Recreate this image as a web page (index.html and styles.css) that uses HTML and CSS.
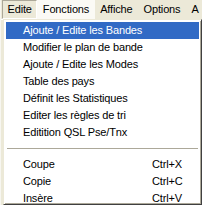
FILE: index.html
```html
<!DOCTYPE html>
<html lang="fr">
<head>
    <meta charset="UTF-8">
    <title>Edite</title>
    <link rel="stylesheet" href="styles.css">
</head>
<body>
<div class="win">
    <ul class="bar">
        <li class="down">Edite</li>
        <li class="hot">Fonctions</li>
        <li>Affiche</li>
        <li>Options</li>
        <li>A</li>
    </ul>
    <div class="menu">
        <ul>
            <li class="sel"><span>Ajoute / Edite les Bandes</span></li>
            <li><span>Modifier le plan de bande</span></li>
            <li><span>Ajoute / Edite les Modes</span></li>
            <li><span>Table des pays</span></li>
            <li><span>Définit les Statistiques</span></li>
            <li><span>Editer les règles de tri</span></li>
            <li><span>Editition QSL Pse/Tnx</span></li>
            <li class="sep"></li>
            <li><span>Coupe</span><em>Ctrl+X</em></li>
            <li><span>Copie</span><em>Ctrl+C</em></li>
            <li><span>Insère</span><em>Ctrl+V</em></li>
        </ul>
    </div>
</div>
</body>
</html>
```
FILE: styles.css
```css
*{
    margin:0;
    padding:0;
    list-style: none;
}
body{
    background: #ece9d8;
    font: 11px "Liberation Sans", Arial, sans-serif;
    letter-spacing: -0.15px;
    color: #000;
    overflow: hidden;
}
.win{
    position: relative;
    width: 202px;
    height: 205px;
    overflow: hidden;
    border-left: 1px solid #f7f6f0;
    box-sizing: border-box;
}
.bar{
    display: flex;
    height: 19px;
    padding-left: 1px;
    border-bottom: 1px solid #fff;
}
.bar li{
    line-height: 17px;
    padding: 0 4.5px;
    border: 1px solid transparent;
    white-space: nowrap;
}
.bar li.down{
    border-color: #aca899 #fff #fff #aca899;
}
.bar li.hot{
    background: #fbfaf5;
}
.menu{
    position: absolute;
    left: 2px;
    top: 19px;
    width: 199px;
    height: 186px;
    box-sizing: border-box;
    background: #fff;
    border: 1px solid;
    border-color: #ece9d8 #404040 #404040 #ece9d8;
    box-shadow: inset 1px 1px 0 #fff, inset -1px -1px 0 #aca899;
    padding: 2px;
}
.menu li{
    display: flex;
    height: 17px;
    line-height: 17px;
    padding-left: 17px;
    white-space: nowrap;
}
.menu li span{
    flex: 1;
}
.menu li em{
    font-style: normal;
    width: 47px;
}
.menu li.sel{
    background: #316ac5;
    color: #fff;
}
.menu li.sep{
    height: 15px;
    padding: 0;
    margin: 0 1px;
    background: linear-gradient(#fff 7px, #aca899 7px, #aca899 8px, #fff 8px);
}
```
